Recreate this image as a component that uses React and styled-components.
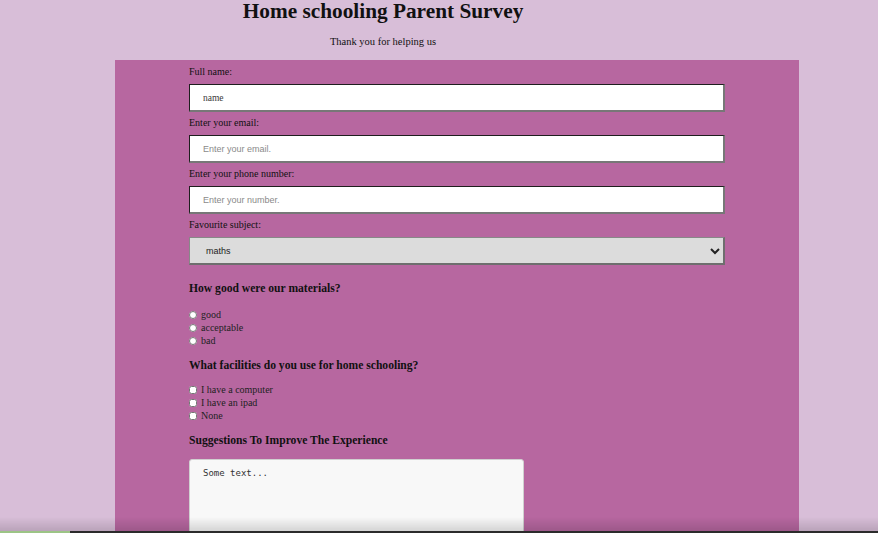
import React from 'react';
import styled, { createGlobalStyle } from 'styled-components';

const GlobalStyle = createGlobalStyle`
  html, body {
    margin: 0;
    padding: 0;
    background: #d8bed8;
    font-family: "Liberation Serif", "Times New Roman", serif;
    color: #111;
    overflow: hidden;
  }
`;

const Header = styled.header`
  width: 766px;
  text-align: center;
`;

const Title = styled.h1`
  margin: 0;
  font-size: 21.3px;
  line-height: 23px;
  font-weight: 700;
`;

const Subtitle = styled.p`
  margin: 8px 0 0;
  font-size: 10.5px;
  line-height: 22px;
  padding-bottom: 7px;
`;

const Form = styled.form`
  width: 684px;
  margin-left: 115px;
  background: #b767a0;
  padding: 6px 0 0 74px;
  box-sizing: border-box;
  height: 480px;
`;

const Label = styled.label`
  display: block;
  font-size: 10px;
  line-height: 12px;
  margin-bottom: 6px;
`;

const TextInput = styled.input`
  display: block;
  box-sizing: border-box;
  width: 536px;
  height: 28px;
  margin: 0 0 5px;
  padding: 0 0 0 13px;
  border-width: 1px 2px 2px 1px;
  border-style: solid;
  border-color: #1e1e1e #777 #777 #1e1e1e;
  background: #fff;
  font-family: ${p => (p.$serif ? '"Liberation Serif", serif' : '"Liberation Sans", Arial, sans-serif')};
  font-size: ${p => (p.$serif ? '9.5px' : '9px')};
  color: #333;
  &::placeholder {
    color: ${p => (p.$serif ? '#3a3a3a' : '#8a8a8a')};
  }
  &:focus { outline: none; }
`;

const Select = styled.select`
  display: block;
  box-sizing: border-box;
  width: 536px;
  height: 28px;
  margin: 0;
  padding: 0 0 0 12px;
  border-width: 1px 2px 2px 1px;
  border-style: solid;
  border-color: #888 #6e6e6e #6e6e6e #888;
  background: #dcdcdc;
  font-family: "Liberation Sans", Arial, sans-serif;
  font-size: 9px;
  color: #222;
`;

const Question = styled.h3`
  margin: ${p => p.$top}px 0 ${p => p.$bottom ?? 12}px;
  font-size: 11.6px;
  line-height: 14px;
  font-weight: 700;
`;

const Option = styled.label`
  display: flex;
  align-items: center;
  height: 13px;
  font-size: 10px;
  color: #222;
`;

const Radio = styled.input`
  width: 8px;
  height: 8px;
  margin: 0 4px 0 0;
`;

const TextArea = styled.textarea`
  display: block;
  box-sizing: border-box;
  width: 335px;
  height: 120px;
  padding: 8px 13px;
  border: 1px solid #d0d0d0;
  border-radius: 3px;
  background: #f8f8f8;
  font-family: "DejaVu Sans Mono", "Liberation Mono", monospace;
  font-size: 9px;
  color: #222;
  resize: none;
  &::placeholder { color: #333; }
`;

const BottomShade = styled.div`
  position: fixed;
  left: 0;
  right: 0;
  bottom: 2px;
  height: 14px;
  background: linear-gradient(to bottom, rgba(0,0,0,0), rgba(0,0,0,0.14));
  pointer-events: none;
`;

const BottomBar = styled.div`
  position: fixed;
  left: 0;
  right: 0;
  bottom: 0;
  height: 2px;
  background: #2b2b2b;
  &::before {
    content: '';
    display: block;
    width: 70px;
    height: 100%;
    background: #9cc486;
  }
`;

export default function App() {
  return (
    <>
      <GlobalStyle />
      <Header>
        <Title>Home schooling Parent Survey</Title>
        <Subtitle>Thank you for helping us</Subtitle>
      </Header>
      <Form>
        <Label>Full name:</Label>
        <TextInput $serif type="text" placeholder="name" />
        <Label>Enter your email:</Label>
        <TextInput type="email" placeholder="Enter your email." />
        <Label>Enter your phone number:</Label>
        <TextInput type="tel" placeholder="Enter your number." />
        <Label>Favourite subject:</Label>
        <Select defaultValue="maths">
          <option value="maths">maths</option>
          <option value="english">english</option>
          <option value="science">science</option>
        </Select>

        <Question $top={17}>How good were our materials?</Question>
        <Option><Radio type="radio" name="materials" />good</Option>
        <Option><Radio type="radio" name="materials" />acceptable</Option>
        <Option><Radio type="radio" name="materials" />bad</Option>

        <Question $top={12} $bottom={10}>What facilities do you use for home schooling?</Question>
        <Option><Radio type="checkbox" />I have a computer</Option>
        <Option><Radio type="checkbox" />I have an ipad</Option>
        <Option><Radio type="checkbox" />None</Option>

        <Question $top={12} $bottom={11}>Suggestions To Improve The Experience</Question>
        <TextArea placeholder="Some text..." />
      </Form>
      <BottomShade />
      <BottomBar />
    </>
  );
}
